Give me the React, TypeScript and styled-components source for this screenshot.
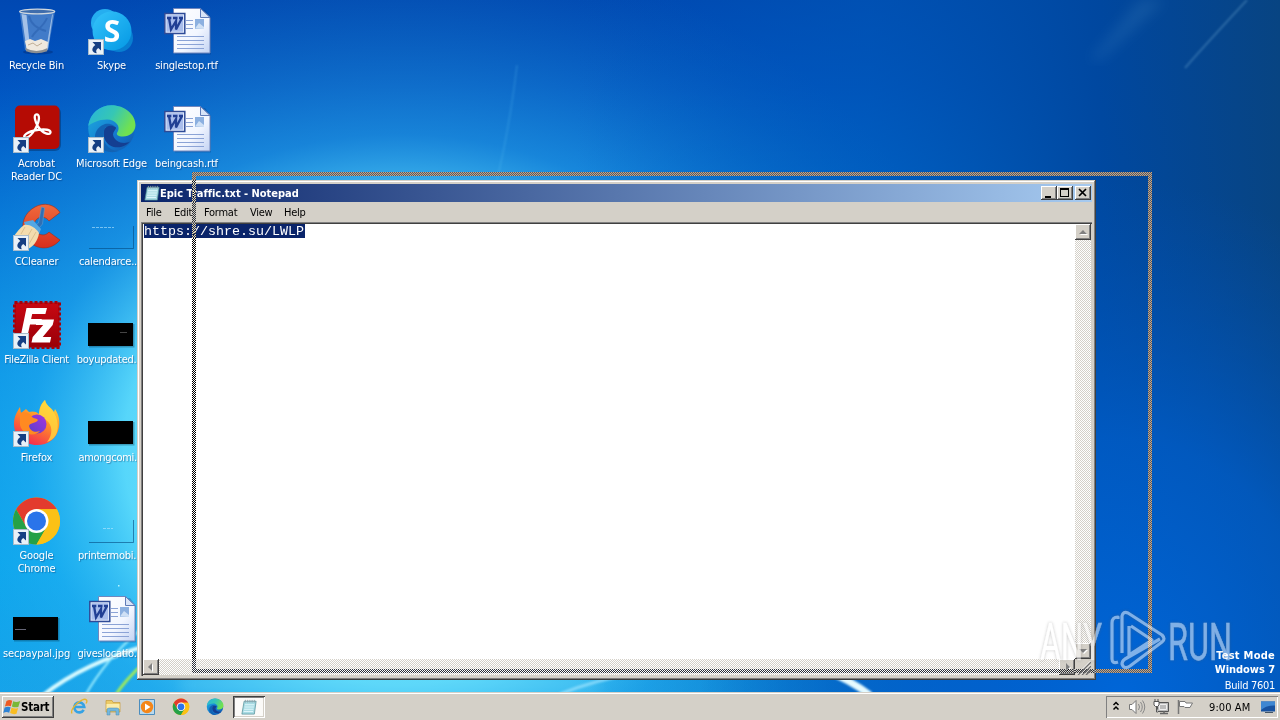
import React from "react";
import styled, { createGlobalStyle, css } from "styled-components";

const FACE = "#d4d0c8";
const UI = `"DejaVu Sans Condensed", "DejaVu Sans", sans-serif`;

const Global = createGlobalStyle`
  * { box-sizing: border-box; }
  body { margin: 0; overflow: hidden; }
`;

const raised = css`
  background: ${FACE};
  box-shadow: inset -1px -1px #404040, inset 1px 1px #fff, inset -2px -2px #808080;
`;

const Screen = styled.div`
  position: relative;
  isolation: isolate;
  width: 1280px;
  height: 720px;
  overflow: hidden;
  display: flex;
  flex-direction: column;
  font: 11px/13px ${UI};
  font-stretch: condensed;
  color: #000;
  background: #0058c0;
`;

const Wallpaper = styled.svg`
  position: absolute;
  inset: 0;
`;

const Desktop = styled.main`
  position: relative;
  height: 692px;
`;

const IconGrid = styled.div`
  position: relative;
  display: grid;
  width: 225px;
  grid-template-columns: repeat(3, 75px);
  grid-template-rows: repeat(7, 98px);
  grid-auto-flow: column;
  margin-left: -1px;
  padding-top: 7px;
`;

const IconCell = styled.div`
  display: flex;
  flex-direction: column;
  align-items: center;
`;

const Glyph = styled.svg`
  width: 49px;
  height: 49px;
  flex: none;
  overflow: visible;
  margin-bottom: 3px;
`;

const Label = styled.span<{ $ls?: number; $pr?: number }>`
  color: #fff;
  text-align: center;
  white-space: pre;
  padding-right: ${(p) => p.$pr ?? 0}px;
  letter-spacing: ${(p) => p.$ls ?? -0.18}px;
  text-shadow: 1px 1px 1px rgba(0, 20, 70, 0.35);
`;

const Window = styled.section`
  position: absolute;
  left: 137px;
  top: 180px;
  width: 959px;
  height: 500px;
  padding: 4px;
  display: flex;
  flex-direction: column;
  background: ${FACE};
  box-shadow: inset -1px -1px #404040, inset 1px 1px ${FACE}, inset -2px -2px #808080, inset 2px 2px #fff;
`;

const TitleBar = styled.header`
  height: 18px;
  flex: none;
  display: flex;
  align-items: center;
  padding: 0 1px 0 3px;
  background: linear-gradient(90deg, #0a246a, #a6caf0);
  color: #fff;
`;

const Title = styled.b`
  flex: 1;
  white-space: pre;
  letter-spacing: -0.03px;
`;

const CaptionButton = styled.button<{ $gap?: boolean }>`
  ${raised}
  width: 16px;
  height: 14px;
  padding: 0;
  border: 0;
  margin-left: ${(p) => (p.$gap ? 2 : 0)}px;
  display: block;
`;

const MenuBar = styled.nav`
  height: 20px;
  flex: none;
  display: flex;
  align-items: center;
  padding-left: 5px;
`;

const MenuItem = styled.span<{ $w: number }>`
  width: ${(p) => p.$w}px;
  letter-spacing: -0.25px;
  white-space: pre;
`;

const Client = styled.div`
  flex: 1;
  display: grid;
  grid-template-columns: 1fr 16px;
  grid-template-rows: 1fr 16px;
  padding: 2px 1px 1px 2px;
  background: #fff;
  box-shadow: inset 1px 1px #808080, inset 2px 2px #404040, inset -1px -1px ${FACE};
`;

const Editor = styled.div`
  padding-left: 1px;
  font: 13.33px/16px "Liberation Mono", monospace;
`;

const Selected = styled.span`
  display: block;
  width: 161px;
  height: 14px;
  white-space: pre;
  background: #0a246a;
  color: #fff;
`;

const Track = styled.div<{ $row?: boolean }>`
  display: flex;
  flex-direction: ${(p) => (p.$row ? "row" : "column")};
  justify-content: space-between;
  background: repeating-conic-gradient(${FACE} 0 25%, #fff 0 50%) 0 0 / 2px 2px;
`;

const ScrollButton = styled.button`
  ${raised}
  width: 16px;
  height: 16px;
  padding: 0;
  border: 0;
  display: block;
`;

const Grip = styled.svg`
  width: 16px;
  height: 16px;
  background: ${FACE};
`;

/* Dithered outline shown while the window is dragged; $over is the part crossing the window. */
const DragOutline = styled.div<{ $over?: boolean }>`
  position: absolute;
  left: 192px;
  top: 172px;
  width: 960px;
  height: 501px;
  ${(p) =>
    p.$over
      ? css`
          mix-blend-mode: difference;
          background: repeating-conic-gradient(#fff 0 25%, #000 0 50%) 0 0 / 2px 2px;
          clip-path: polygon(0 8px, 4px 8px, 4px 497px, 904px 497px, 904px 501px, 0 501px);
        `
      : css`
          background: repeating-conic-gradient(#dfa66c 0 25%, #3a5a80 0 50%) 0 0 / 2px 2px;
          clip-path: polygon(evenodd, 0 0, 100% 0, 100% 100%, 0 100%, 0 0,
            4px 4px, 956px 4px, 956px 497px, 4px 497px, 4px 4px);
        `}
`;

const Brand = styled.svg`
  position: absolute;
  left: 1038px;
  top: 609px;
  width: 204px;
  height: 62px;
  overflow: visible;
  opacity: 0.5;
  filter: drop-shadow(0 0 1.5px rgba(100, 100, 100, 0.7));
`;

const BuildInfo = styled.div`
  position: absolute;
  right: 5px;
  top: 649px;
  color: #fff;
  text-align: right;
  line-height: 14px;
`;

const BuildLine = styled.div<{ $ls: number; $bold?: boolean }>`
  font-weight: ${(p) => (p.$bold ? 700 : 400)};
  letter-spacing: ${(p) => p.$ls}px;
  padding-top: ${(p) => (p.$bold ? 0 : 2)}px;
`;

const Taskbar = styled.footer`
  position: relative;
  height: 28px;
  display: flex;
  align-items: flex-start;
  padding: 4px 2px 0;
  background: ${FACE};
  box-shadow: inset 0 1px ${FACE}, inset 0 2px #fff;
`;

const StartButton = styled.button`
  ${raised}
  width: 52px;
  height: 22px;
  padding: 0 0 0 1px;
  border: 0;
  display: flex;
  align-items: center;
  font: bold 11.5px/13px ${UI};
  font-stretch: condensed;
  letter-spacing: -0.25px;
  color: #000;
`;

const QuickLaunch = styled.div`
  display: flex;
  gap: 16px;
  padding: 2px 0 0 16px;
`;

const TaskButton = styled.div`
  width: 32px;
  height: 22px;
  margin-left: 9px;
  display: flex;
  align-items: center;
  justify-content: center;
  background: #fbfaf8;
  box-shadow: inset 1px 1px #404040, inset -1px -1px #fff, inset 2px 2px #808080, inset -2px -2px ${FACE};
`;

const Tray = styled.div`
  width: 172px;
  height: 22px;
  margin-left: auto;
  display: flex;
  align-items: center;
  padding-left: 6px;
  box-shadow: inset 1px 1px #808080, inset -1px -1px #fff;
`;

const Clock = styled.time`
  width: 50px;
  margin-left: 15px;
  white-space: pre;
  letter-spacing: 0.1px;
`;

const Small = styled.svg<{ $w?: number; $ml?: number }>`
  width: ${(p) => p.$w ?? 18}px;
  height: 18px;
  flex: none;
  margin-left: ${(p) => p.$ml ?? 0}px;
`;

const Shortcut = () => (
  <g transform="translate(1 32)">
    <rect x=".5" y=".5" width="15" height="15" fill="#e9f1f8" stroke="#a9bccb" />
    <path d="M4.500 3h8.500v8.500l-2.800-2.600c-2.200 1.600-2.500 3.200-1.400 5.300C3.800 13.500 2.600 9.500 7.300 5.900z" fill="#153f83" />
  </g>
);

const RecycleBin = () => (
  <g>
    <ellipse cx="26" cy="45" rx="15" ry="2.500" fill="#002060" opacity=".35" />
    <path d="M7.500 4 13 43q11 5.500 23 0L43 4z" fill="#6c9bd4" opacity=".6" />
    <path d="m9.500 7 5 35 4 2-4-36z" fill="#e6f0fb" opacity=".6" />
    <path d="m40 8-6 35 2-1 5-35z" fill="#dcebfa" opacity=".6" />
    <path d="M17 9c2 8 9 13 17 15M35 11c-4 10-12 12-15 19" stroke="#2458a8" strokeWidth="2" fill="none" opacity=".45" />
    <path d="m13 34 5-2 5 2 6-2 7 3-1 8q-11 4-20 0z" fill="#efe9de" />
    <path d="m16 38 5-2 4 3 5-3" stroke="#bfae96" fill="none" />
    <path d="M13.500 41q11 6 22 0l-.4 3.300q-11 4-21 0z" fill="#8c8f92" />
    <ellipse cx="25.200" cy="4.500" rx="17.500" ry="2.300" fill="#3f6dac" stroke="#d0d8de" strokeWidth="1.300" />
  </g>
);

const Skype = () => (
  <g>
    <circle cx="18" cy="16" r="14" fill="#25aef0" />
    <circle cx="32" cy="31" r="14" fill="#087fd1" />
    <circle cx="25" cy="24" r="19.500" fill="url(#sky)" />
    <text x="25" y="34.500" textAnchor="middle" fontFamily="Open Sans, sans-serif" fontStretch="normal" fontWeight="700" fontSize="30" fill="#fff">S</text>
    <Shortcut />
  </g>
);

const WordDoc = () => (
  <g>
    <path d="M13 3h30l6 8v36.500H13z" fill="#042a66" opacity=".25" />
    <path d="M11.500 1.500h27l9.500 9V46H11.500z" fill="url(#paper)" stroke="#7187bd" />
    <path d="M38.500 1.500V10.500H48z" fill="#d7e3f7" stroke="#5f7bb8" />
    <path d="M24 13.500h7M24 17.500h7M24 21.500h7M15 29.500h27M15 33.500h27M15 37.500h27M15 41.500h27" stroke="#8ba3d6" />
    <rect x="33" y="12" width="9" height="10" fill="#8cb0e0" />
    <path d="M33 21.500 37 16l5 4v2z" fill="#cfe0f5" />
    <rect x="2.800" y="6.500" width="20" height="20" fill="#dfe8fb" stroke="#2e4b97" strokeWidth="1.500" />
    <rect x="4.500" y="8.200" width="16.500" height="16.500" fill="#a9bdec" />
    <path d="m7 11 2 11.500 5-8.500v8.500L20 11M5 11h4.300M11 11h4.500M17 11h4" stroke="#213f94" strokeWidth="2.300" fill="none" />
  </g>
);

const Acrobat = () => (
  <g>
    <rect x="5" y="2" width="44" height="44" rx="6" fill="#032252" opacity=".4" />
    <rect x="3" y=".5" width="44.500" height="43.500" rx="5" fill="#b50b04" />
    <path d="M24 9.500c4-1 4 6-.5 14-3.500 6-7.500 10-10.500 9s2-6 12-7.500c8-1.200 14-.3 13.500 2.500s-7.500 1.500-12.500-6C23 16.500 21.500 10.500 24 9.500z" fill="none" stroke="#fff" strokeWidth="2.300" />
    <Shortcut />
  </g>
);

const EdgeShape = () => (
  <g>
    <circle cx="24.500" cy="23.500" r="23.300" fill="url(#edgeBlue)" />
    <path d="M1.200 21C3 8 13 .2 24.500.2 38 .2 48.500 9.500 48.500 20c0 7-6 11.500-12.500 11.500-5 0-7.500-2-5.500-4.500C34 22 29 14.500 20 14.500c-8.500 0-15.500 3.500-18.800 6.500z" fill="url(#edgeGreen)" />
    <path d="M18 23c-5 10 1 23 14 23-12 4-24-3-24-14 0-6 4-11 10-13 6-1 11 2 11.500 6-4-4-8-5-11.500-2z" fill="#1263b4" />
    <path d="M17.500 24C14 34 22 44.500 34 42c4-1 7-3 9-5.500C37 40 27 37 26 29.500c0-3 3-5 3-7-5-3-9-2-11.500 1.500z" fill="#143f92" />
  </g>
);
const Edge = () => (<g><EdgeShape /><Shortcut /></g>);

const CCleaner = () => (
  <g>
    <path d="M48 9.500C42 1 32-1 23 4 12 10 8 22 13 32c6 14 24 18 35 5L37 29c-5 6-15 2-15-6 0-9 10-12 15-5z" fill="url(#cc)" stroke="#a52813" strokeWidth=".6" />
    <path d="m29.500 4 3 1-2 16-6 7-4-4 6-4z" fill="#2f6fb4" stroke="#5b9cd4" strokeWidth=".6" />
    <path d="m12 19 9-2 8 9-2 5-13-6z" fill="#54a7e4" />
    <path d="M12 22C8 25 4 30 2 33l12 14c7-3 12-9 13-17-4-6-10-9-15-8z" fill="#f3dcae" />
    <path d="m9 31 4-7m1 12 6-10m-3 15 7-12" stroke="#dcc08e" fill="none" />
    <Shortcut />
  </g>
);

const FileZilla = () => (
  <g>
    <rect x="2.500" y="1.500" width="45" height="45" fill="url(#fz)" stroke="#a70008" strokeWidth="3" strokeDasharray="3 2" />
    <path d="M14.500 7H35l-1.600 6H20.200l-1.100 5h10.700l-1.500 5.500H18L15.500 35H8.700zM25 18.500h17l-1.300 5.500-10 12h8.500L38 41.500H19.500l1.200-5.500 10.500-12H24z" fill="#fff" />
    <Shortcut />
  </g>
);

const Firefox = () => (
  <g>
    <path d="M2 25C2 17 5 13 8 8l1 6 5-4 3 3c3-1 7-1 10 2 0-6 2-10 6-14 1 6 6 7 9 12l1-3c4 6 5 12 4 18-2 12-11 18-22 18C12 46 2 37 2 25z" fill="url(#ff)" />
    <path d="M27 15c1-7 3-11 6-14 1 7 10 9 12 20 3 13-3 20-10 22 6-7 6-17-1-22-3-3-5-4-7-6z" fill="#ffd83f" opacity=".8" />
    <circle cx="25" cy="25" r="9.500" fill="url(#ffp)" />
    <path d="M8 14c5-2 10 0 12 4 2 2 5 1 6 3-2 4-8 2-9 6 1 5 6 7 11 5-5 6-18 4-20-6z" fill="#ff8a21" />
    <Shortcut />
  </g>
);

const ChromeShape = () => (
  <g>
    <circle cx="24.500" cy="24" r="23.500" fill="#fbc116" />
    <path d="M4.150 12.250A23.500 23.500 0 0 1 44.850 12.250H24.500L14.300 30z" fill="#e33b2e" />
    <path d="M4.150 12.250A23.500 23.500 0 0 0 24.500 47.500L34.700 30 24.500 24 14.300 30z" fill="#25a148" />
    <path d="M24.500 12.250h20.350A23.500 23.500 0 0 1 24.500 47.500L34.700 30z" fill="#fbc116" />
    <circle cx="24.500" cy="24" r="12" fill="#fff" />
    <circle cx="24.500" cy="24" r="9.500" fill="#2a74ea" />
  </g>
);
const Chrome = () => (<g><ChromeShape /><Shortcut /></g>);

const Thumb = ({ line }: { line?: [number, number, string] }) => (
  <g>
    <rect x="2" y="23" width="45.500" height="23.500" fill="#023" opacity=".3" />
    <rect x="1" y="22" width="45" height="23" fill="#000" />
    {line && <path d={`M${line[0]} ${line[1]}.5h${line[0] < 9 ? 11 : 7}`} stroke={line[2]} />}
  </g>
);

const ClearThumb = ({ mark }: { mark: string }) => (
  <g>
    <path d="M2 45.500H46.500V23" fill="none" stroke="#034a80" opacity=".6" />
    <path d={mark} stroke="#b9e8ff" opacity=".6" strokeDasharray="3 1" />
  </g>
);

const icons: { label: string; ls?: number; pr?: number; art: React.ReactNode }[] = [
  { label: "Recycle Bin", art: <RecycleBin /> },
  { label: "Acrobat\nReader DC", art: <Acrobat /> },
  { label: "CCleaner", art: <CCleaner /> },
  { label: "FileZilla Client", ls: -0.3, art: <FileZilla /> },
  { label: "Firefox", art: <Firefox /> },
  { label: "Google\nChrome", art: <Chrome /> },
  { label: "secpaypal.jpg", ls: -0.1, art: <Thumb line={[3, 34, "#667"]} /> },
  { label: "Skype", art: <Skype /> },
  { label: "Microsoft Edge", ls: -0.15, art: <Edge /> },
  { label: "calendarce...", ls: -0.22, pr: 4, art: <ClearThumb mark="M5 24.500h22" /> },
  { label: "boyupdated...", ls: -0.25, pr: 4, art: <Thumb line={[33, 31, "#444"]} /> },
  { label: "amongcomi...", ls: -0.3, pr: 2, art: <Thumb /> },
  { label: "printermobi...", ls: -0.25, pr: 3, art: <ClearThumb mark="M16 31.500h10" /> },
  { label: "giveslocatio...", ls: -0.22, pr: 3, art: <WordDoc /> },
  { label: "singlestop.rtf", art: <WordDoc /> },
  { label: "beingcash.rtf", art: <WordDoc /> },
];

const NotepadIcon = () => (
  <Small viewBox="0 0 18 18" $w={16}>
    <path d="M3.500 2.500H17L15 17H1z" fill="#a8dbe3" stroke="#4f8b96" strokeWidth=".8" />
    <path d="M4.500 6.500h10.500M4 9h10.500M3.500 11.500H14M3 14h10.500" stroke="#e8fbff" />
    <path d="M5 1v3M7.500 1v3M10 1v3M12.500 1v3M15 1v3" stroke="#8fa0a8" />
  </Small>
);

const Defs = () => (
  <defs>
    <linearGradient id="base" x1="0" y1="0" x2="0" y2="1">
      <stop offset="0" stopColor="#0048b2" /><stop offset=".12" stopColor="#0054c2" /><stop offset=".3" stopColor="#0072da" />
      <stop offset=".52" stopColor="#0096ee" /><stop offset=".78" stopColor="#00aaf6" /><stop offset="1" stopColor="#16a8f0" />
    </linearGradient>
    <linearGradient id="dark" x1="0" y1="0" x2="1" y2="0">
      <stop offset=".45" stopColor="#0058b8" stopOpacity="0" /><stop offset=".68" stopColor="#0056b4" stopOpacity=".6" />
      <stop offset=".86" stopColor="#00479e" stopOpacity=".95" /><stop offset="1" stopColor="#084482" />
    </linearGradient>
    <radialGradient id="glow" gradientUnits="userSpaceOnUse" cx="0" cy="0" r="1" gradientTransform="translate(400 450) scale(600 510)">
      <stop offset="0" stopColor="#a8fbff" /><stop offset=".46" stopColor="#66e0fc" stopOpacity=".85" />
      <stop offset=".62" stopColor="#34aee8" stopOpacity=".45" /><stop offset="1" stopColor="#1878b8" stopOpacity="0" />
    </radialGradient>
    <radialGradient id="low" gradientUnits="userSpaceOnUse" cx="0" cy="0" r="1" gradientTransform="translate(1120 700) scale(420 520)">
      <stop offset="0" stopColor="#0066d8" /><stop offset=".5" stopColor="#005ecc" stopOpacity=".75" /><stop offset="1" stopColor="#0052b8" stopOpacity="0" />
    </radialGradient>
    <linearGradient id="sky" x2="1" y2="1"><stop stopColor="#35c3fa" /><stop offset="1" stopColor="#0498e4" /></linearGradient>
    <linearGradient id="paper" x2="1" y2="1"><stop stopColor="#fff" /><stop offset=".6" stopColor="#f2f6ff" /><stop offset="1" stopColor="#c3d3f3" /></linearGradient>
    <linearGradient id="edgeBlue" x2="1" y2="1"><stop stopColor="#1fb0df" /><stop offset=".6" stopColor="#1479d0" /><stop offset="1" stopColor="#1154a8" /></linearGradient>
    <linearGradient id="edgeGreen" y2=".4"><stop stopColor="#26b3de" /><stop offset=".55" stopColor="#36c7b4" /><stop offset="1" stopColor="#71e150" /></linearGradient>
    <linearGradient id="cc" x2="0" y2="1"><stop stopColor="#ef6a3c" /><stop offset="1" stopColor="#d92e1c" /></linearGradient>
    <linearGradient id="fz" x2="0" y2="1"><stop stopColor="#c80812" /><stop offset="1" stopColor="#980008" /></linearGradient>
    <linearGradient id="ff" x1=".8" y1="0" x2=".3" y2="1"><stop stopColor="#ffe13c" /><stop offset=".45" stopColor="#ff9127" /><stop offset="1" stopColor="#f32652" /></linearGradient>
    <linearGradient id="ffp" x1="1" x2="0" y2="1"><stop stopColor="#a633e0" /><stop offset="1" stopColor="#5541c8" /></linearGradient>
    <filter id="soft"><feGaussianBlur stdDeviation="1.100" /></filter>
    <filter id="wide"><feGaussianBlur stdDeviation="7" /></filter>
  </defs>
);

export default function App() {
  return (
    <Screen>
      <Global />
      <Wallpaper width="1280" height="720">
        <Defs />
        <rect width="1280" height="720" fill="url(#base)" />
        <rect width="1280" height="720" fill="url(#glow)" />
        <rect width="1280" height="720" fill="url(#dark)" />
        <rect width="1280" height="720" fill="url(#low)" />
        <path d="M1140 0 1090 60 1100 60 1165 0z" fill="#5da0d0" opacity=".18" filter="url(#wide)" />
        <path d="M1247 0Q1205 45 1185 68" stroke="#80b8dc" strokeWidth="2" fill="none" opacity=".3" filter="url(#soft)" />
        <path d="M517 65Q510 125 497 180" stroke="#65c7f6" strokeWidth="1.500" fill="none" opacity=".25" filter="url(#soft)" />
        <rect x="180" y="678" width="420" height="14" fill="#6fd8f8" opacity=".3" filter="url(#wide)" />
        <g fill="none" filter="url(#soft)">
          <path d="M42 696Q85 662 150 645" stroke="#d8fbff" strokeWidth="4" />
          <path d="M85 696Q105 660 140 630" stroke="#9beeff" strokeWidth="2" />
          <path d="M115 696Q125 680 145 662" stroke="#a6ee55" strokeWidth="3" />
          <path d="M560 694Q595 680 640 672" stroke="#a1e5ff" strokeWidth="3" opacity=".7" />
          <path d="M825 670Q850 680 870 695" stroke="#e5fbff" strokeWidth="7" />
        </g>
        <rect x="118" y="585" width="1.500" height="1.500" fill="#b6f6ff" />
      </Wallpaper>
      <Desktop>
        <IconGrid>
          {icons.map((i) => (
            <IconCell key={i.label}>
              <Glyph viewBox="0 0 49 49">{i.art}</Glyph>
              <Label $ls={i.ls} $pr={i.pr}>{i.label}</Label>
            </IconCell>
          ))}
        </IconGrid>
        <DragOutline />
        <Window>
          <TitleBar>
            <NotepadIcon />
            <Title>Epic Traffic.txt - Notepad</Title>
            <CaptionButton><svg width="16" height="14"><path d="M4 10h6v2H4z" /></svg></CaptionButton>
            <CaptionButton><svg width="16" height="14"><path d="M3 2h9v9H3zm1 2v6h7V4z" fillRule="evenodd" /></svg></CaptionButton>
            <CaptionButton $gap><svg width="16" height="14"><path d="m4 3 7 7m0-7-7 7" stroke="#000" strokeWidth="1.700" /></svg></CaptionButton>
          </TitleBar>
          <MenuBar>
            <MenuItem $w={28}>File</MenuItem>
            <MenuItem $w={30}>Edit</MenuItem>
            <MenuItem $w={46}>Format</MenuItem>
            <MenuItem $w={34}>View</MenuItem>
            <MenuItem $w={30}>Help</MenuItem>
          </MenuBar>
          <Client>
            <Editor><Selected>https://shre.su/LWLP</Selected></Editor>
            <Track>
              <ScrollButton><svg width="16" height="16"><path d="M4 10h8L8 6z" fill="#fff" transform="translate(1 1)" /><path d="M4 10h8L8 6z" fill="#808080" /></svg></ScrollButton>
              <ScrollButton><svg width="16" height="16"><path d="M4 6h8l-4 4z" fill="#fff" transform="translate(1 1)" /><path d="M4 6h8l-4 4z" fill="#808080" /></svg></ScrollButton>
            </Track>
            <Track $row>
              <ScrollButton><svg width="16" height="16"><path d="M9 4v8L5 8z" fill="#fff" transform="translate(1 1)" /><path d="M9 4v8L5 8z" fill="#808080" /></svg></ScrollButton>
              <ScrollButton><svg width="16" height="16"><path d="M7 4v8l4-4z" fill="#fff" transform="translate(1 1)" /><path d="M7 4v8l4-4z" fill="#808080" /></svg></ScrollButton>
            </Track>
            <Grip viewBox="0 0 16 16">
              <path d="M3 16 16 3M7 16l9-9M11 16l5-5" stroke="#707070" strokeWidth="1.500" />
              <path d="M2 15.500 15.500 2M6 15.500 15.500 6" stroke="#fff" strokeWidth=".8" />
            </Grip>
          </Client>
        </Window>
        <BuildInfo>
          <BuildLine $bold $ls={0.25}>Test Mode</BuildLine>
          <BuildLine $bold $ls={-0.05}>Windows 7</BuildLine>
          <BuildLine $ls={-0.3}>Build 7601</BuildLine>
        </BuildInfo>
      </Desktop>
      <Taskbar>
        <StartButton>
          <Small viewBox="0 0 18 18" $w={18}>
            <path d="M3.500 3Q6.500 1 9.200 2.800L7.900 8.200Q5 7 1.900 8.500z" fill="#ed5a24" />
            <path d="M10.200 3.200q3 1.500 7-.2L15.300 8.900Q12 10 8.900 8.500z" fill="#79b837" />
            <path d="M1.600 9.500Q5 8 7.600 9.300L6.200 14.800Q3.500 13.200.3 14.900z" fill="#2e83d5" />
            <path d="M8.600 9.600q3 1.600 6.500.4L13.500 15.800q-3 1.200-6.400-.7z" fill="#f9bd22" />
          </Small>
          Start
        </StartButton>
        <QuickLaunch>
          <Small viewBox="0 0 18 18">
            <path d="M13.700 11.800A5 5 0 1 1 14.300 9H5" fill="none" stroke="#35a2e4" strokeWidth="2.600" />
            <path d="M2 15.500C-.5 11 13-2 16.500 2c.8 1 .2 2.500-.5 3.500" fill="none" stroke="#e5b52e" strokeWidth="1.300" />
          </Small>
          <Small viewBox="0 0 18 18">
            <path d="M2 2.500h6l1 2h7V14H2z" fill="#eccb68" stroke="#c79c38" strokeWidth=".7" />
            <path d="M2.500 6h13v5h-13z" fill="#fbecaa" />
            <path d="M3 17v-5q0-2 2-2h8q2 0 2 2v5h-3v-4H6v4z" fill="#74b8dd" stroke="#4c88b1" strokeWidth=".5" />
          </Small>
          <Small viewBox="0 0 18 18">
            <path d="M1.500 1.500h15v15h-15z" fill="#b9d9ee" stroke="#4b8dbe" />
            <circle cx="9" cy="9" r="6.200" fill="#f48619" /><path d="m7 5.500 5.500 3.500L7 12.500z" fill="#fff" />
          </Small>
          <Small viewBox="-1 -1 51 51"><ChromeShape /></Small>
          <Small viewBox="-1 -1 51 51"><EdgeShape /></Small>
        </QuickLaunch>
        <TaskButton><NotepadIcon /></TaskButton>
        <Tray>
          <Small viewBox="0 0 8 18" $w={8}><path d="m1.500 7 2.500-2.500L6.500 7M1.500 11.500 4 9l2.500 2.500" fill="none" stroke="#000" strokeWidth="1.500" /></Small>
          <Small viewBox="0 0 18 18" $ml={8}>
            <path d="M1.500 6.500H4l4-4v13l-4-4H1.500z" fill="#fff" stroke="#777" />
            <path d="M10.500 6q2 3 0 6M12.500 4q3.500 5 0 10M14.500 2.500q4.500 6.500 0 13" fill="none" stroke="#888" />
          </Small>
          <Small viewBox="0 0 18 18" $ml={6}>
            <path d="M5.500 4.500h11v9h-11z" fill="#bbb" stroke="#555" /><path d="M7.500 6.500h7v5h-7z" fill="#bbb" stroke="#eee" />
            <path d="M8 15.500h8M12 13v2" stroke="#666" strokeWidth="1.500" />
            <path d="M2 3.500h5V7L5.500 8.500h-2L2 7zM3 1v2.500M6 1v2.500M4.500 8.500V14H6" fill="#fff" stroke="#555" />
          </Small>
          <Small viewBox="0 0 18 18" $ml={6}>
            <path d="M2.500 2v14" stroke="#777" strokeWidth="1.500" />
            <path d="M3.500 3.500H9l1 1.500h6.500L14 9.500H9L8 8.500H3.500z" fill="#fff" stroke="#777" />
          </Small>
          <Clock>9:00 AM</Clock>
          <Small viewBox="0 0 16 18" $w={16} $ml={1}>
            <path d="M1 3.500h14v10H1z" fill="#1752a0" /><path d="M1 3.500h14v4Q7 7 1 12z" fill="#3e87d2" /><path d="M5 14.500h8" stroke="#456" />
          </Small>
        </Tray>
      </Taskbar>
      <DragOutline $over />
      <Brand viewBox="0 0 204 62">
        <g fontFamily="Roboto, sans-serif" fontStretch="normal" fontSize="52" fill="#fff" stroke="#fff" strokeWidth=".5">
          <text x="2" y="51" textLength="62" lengthAdjust="spacingAndGlyphs">ANY</text>
          <text x="130" y="51" textLength="64" lengthAdjust="spacingAndGlyphs">RUN</text>
        </g>
        <g fill="none" stroke="#fff" strokeWidth="3.200" strokeLinejoin="round">
          <path d="M80 10v-2q-6 0-6 6V50q0 5 6 3" />
          <path d="M84 44V7q1-5 6-3l34 22q4 4 0 7L92 57q-6 4-8-2 0-3 3-5l35-20" />
          <path d="M91 17v29l23-15-21-14" />
        </g>
      </Brand>
    </Screen>
  );
}
